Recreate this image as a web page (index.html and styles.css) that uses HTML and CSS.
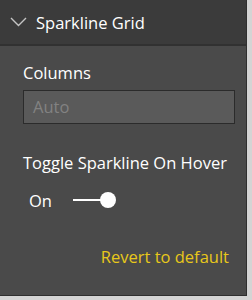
FILE: index.html
```html
<!DOCTYPE html>
<html lang="en">
<head>
    <meta charset="UTF-8">
    <title>Sparkline Grid</title>
    <link rel="stylesheet" href="styles.css">
</head>
<body>

<div class="pane">
    <div class="pane-header">
        <svg class="chevron" width="17" height="10" viewBox="0 0 17 10">
            <polyline points="1,1 8.5,8.5 16,1" fill="none" stroke="#c4c4c4" stroke-width="1.4"/>
        </svg>
        <span class="pane-title">Sparkline Grid</span>
    </div>
    <div class="pane-body">
        <div class="field">
            <div class="field-label">Columns</div>
            <div class="text-input">Auto</div>
        </div>
        <div class="field">
            <div class="field-label">Toggle Sparkline On Hover</div>
            <div class="toggle-row">
                <span class="toggle-text">On</span>
                <span class="toggle">
                    <span class="toggle-track"></span>
                    <span class="toggle-knob"></span>
                </span>
            </div>
        </div>
        <div class="revert">Revert to default</div>
    </div>
</div>

</body>
</html>
```

FILE: styles.css
```css
body {
    margin: 0;
    background-color: #d4d4d4;
    font-family: "Open Sans", Arial, sans-serif;
}
.pane {
    width: 246px;
    height: 295px;
    background-color: #4a4a4a;
    border-right: 1px solid #2f2f2f;
    border-bottom: 1px solid #2f2f2f;
    display: flex;
    flex-direction: column;
}
.pane-header {
    height: 44px;
    background-color: #3b3b3b;
    border-bottom: 2px solid #313131;
    display: flex;
    align-items: center;
    padding-left: 10px;
}
.chevron {
    margin-right: 9px;
}
.pane-title {
    color: #ffffff;
    font-size: 16.5px;
}
.pane-body {
    flex: 1;
    padding: 16px 12px 0 23px;
    display: flex;
    flex-direction: column;
}
.field-label {
    color: #ffffff;
    font-size: 16.5px;
    line-height: 22px;
}
.text-input {
    margin-top: 6px;
    width: 212px;
    height: 34px;
    box-sizing: border-box;
    background-color: #5a5a5a;
    border: 1px solid #2b2b2b;
    color: #828282;
    font-size: 16.5px;
    line-height: 32px;
    padding-left: 9px;
}
.field + .field {
    margin-top: 28px;
}
.toggle-row {
    display: flex;
    align-items: center;
    height: 16px;
    margin-top: 18px;
    padding-left: 6px;
}
.toggle-text {
    color: #ffffff;
    font-size: 16.5px;
    width: 44px;
}
.toggle {
    position: relative;
    width: 44px;
    height: 16px;
    display: flex;
    align-items: center;
}
.toggle-track {
    width: 36px;
    height: 2px;
    background-color: #ffffff;
}
.toggle-knob {
    position: absolute;
    left: 27px;
    top: 0;
    width: 16px;
    height: 16px;
    border-radius: 50%;
    background-color: #ffffff;
}
.revert {
    margin-top: 38px;
    align-self: flex-end;
    margin-right: 5px;
    color: #e8c81a;
    font-size: 16.5px;
    line-height: 22px;
}
```
